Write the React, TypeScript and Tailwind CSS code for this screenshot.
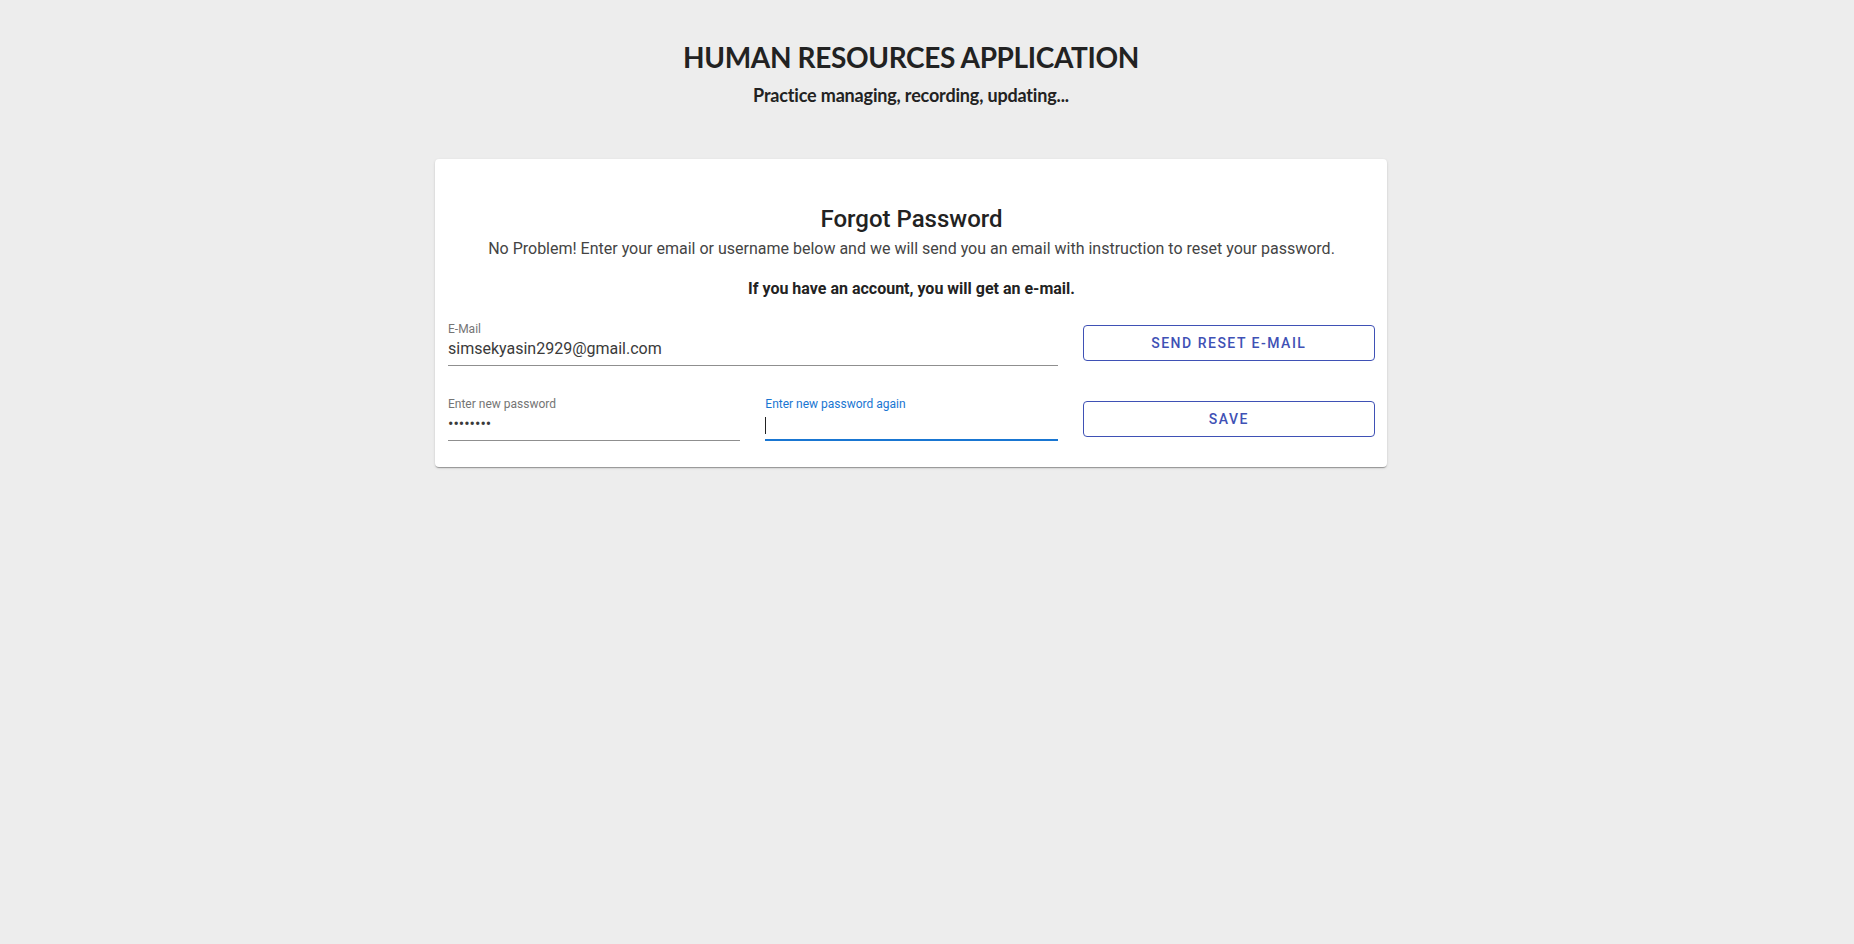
import React from "react";

function Field({
  label,
  value,
  type = "text",
  focused = false,
}: {
  label: string;
  value: string;
  type?: string;
  focused?: boolean;
}) {
  return (
    <div className="relative flex flex-col">
      <label
        className={
          "text-[12px] leading-[14px] " +
          (focused ? "text-[#1976d2]" : "text-[#757575]")
        }
      >
        {label}
      </label>
      <input
        type={type}
        defaultValue={value}
        readOnly
        className={
          "h-[30px] w-full bg-transparent pt-[1px] pb-[5px] text-[16px] text-[#3a3a3a] outline-none " +
          (focused
            ? "border-b-2 border-[#1976d2]"
            : "border-b border-[#8f8f8f]")
        }
      />
      {focused && (
        <span className="pointer-events-none absolute left-0 top-[20px] h-[17px] w-px bg-[#222]" />
      )}
    </div>
  );
}

function OutlineButton({ children }: { children: React.ReactNode }) {
  return (
    <button className="h-[36px] w-full rounded-[4px] border border-[#3f51b5] bg-white text-[14px] font-medium uppercase tracking-[1.5px] text-[#3f51b5]">
      {children}
    </button>
  );
}

export default function App() {
  return (
    <div className="min-h-screen bg-[#ededed] pr-[32px] font-['Roboto',sans-serif]">
      <header className="flex flex-col items-center pt-[43px] font-['Lato',sans-serif] text-[#222]">
        <h1 className="text-[28px] font-bold leading-none tracking-[-0.35px]">
          HUMAN RESOURCES APPLICATION
        </h1>
        <p className="mt-[15px] text-[18px] font-bold leading-none tracking-[-0.17px]">
          Practice managing, recording, updating...
        </p>
      </header>

      <div className="mx-auto mt-[55px] w-[952px] rounded-[4px] bg-white pb-[26px] pl-[13px] pr-[12px] pt-[44px] shadow-[0_2px_1px_-1px_rgba(0,0,0,0.2),0_1px_1px_0_rgba(0,0,0,0.14),0_1px_3px_0_rgba(0,0,0,0.12)]">
        <div className="text-center">
          <h2 className="text-[24px] font-medium leading-[32px] text-[#222]">
            Forgot Password
          </h2>
          <p className="mt-[2px] text-[16px] leading-[24px] text-[#444]">
            No Problem! Enter your email or username below and we will send you
            an email with instruction to reset your password.
          </p>
          <p className="mt-[16px] text-[16px] font-bold leading-[24px] text-[#222]">
            If you have an account, you will get an e-mail.
          </p>
        </div>

        <div className="mt-[21px] grid grid-cols-3 gap-x-[25px] gap-y-[31px]">
          <div className="col-span-2">
            <Field label="E-Mail" value="simsekyasin2929@gmail.com" />
          </div>
          <div className="pt-[3px]">
            <OutlineButton>Send Reset E-Mail</OutlineButton>
          </div>

          <Field label="Enter new password" value="12345678" type="password" />
          <Field label="Enter new password again" value="" type="password" focused />
          <div className="pt-[4px]">
            <OutlineButton>Save</OutlineButton>
          </div>
        </div>
      </div>
    </div>
  );
}
